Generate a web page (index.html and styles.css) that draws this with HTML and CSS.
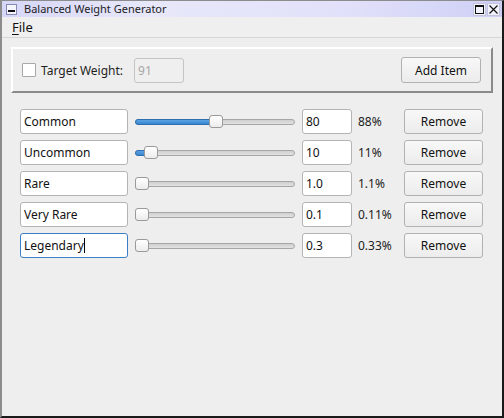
FILE: index.html
```html
<!DOCTYPE html>
<html>
<head>
<meta charset="utf-8">
<link rel="stylesheet" href="styles.css">
</head>
<body>
<div class="window">
  <div class="titlebar">
    <span class="ticon"><span class="ticon-bar"></span></span>
    <span class="title">Balanced Weight Generator</span>
    <span class="tbtns">
      <span class="tbtn max"><span class="max-box"></span></span>
      <span class="tbtn close">
        <svg width="11" height="11" viewBox="0 0 11 11"><path d="M1.5 1.5 L9.5 9.5 M9.5 1.5 L1.5 9.5" stroke="#111" stroke-width="1.2" fill="none"/></svg>
      </span>
    </span>
  </div>
  <div class="menubar"><span class="menu"><u>F</u>ile</span></div>
  <div class="content">
    <div class="group">
      <span class="check"></span>
      <span class="label">Target Weight:</span>
      <span class="input disabled small">91</span>
      <span class="spacer"></span>
      <span class="button add">Add Item</span>
    </div>
    <div class="rows">
      <div class="row">
        <span class="input name">Common</span>
        <span class="slider"><span class="groove"></span><span class="fill" style="width:80px"></span><span class="handle" style="left:74px"></span></span>
        <span class="input value">80</span>
        <span class="pct">88%</span>
        <span class="button remove">Remove</span>
      </div>
      <div class="row">
        <span class="input name">Uncommon</span>
        <span class="slider"><span class="groove"></span><span class="fill" style="width:14px"></span><span class="handle" style="left:9px"></span></span>
        <span class="input value">10</span>
        <span class="pct">11%</span>
        <span class="button remove">Remove</span>
      </div>
      <div class="row">
        <span class="input name">Rare</span>
        <span class="slider"><span class="groove"></span><span class="handle" style="left:0px"></span></span>
        <span class="input value">1.0</span>
        <span class="pct">1.1%</span>
        <span class="button remove">Remove</span>
      </div>
      <div class="row">
        <span class="input name">Very Rare</span>
        <span class="slider"><span class="groove"></span><span class="handle" style="left:0px"></span></span>
        <span class="input value">0.1</span>
        <span class="pct">0.11%</span>
        <span class="button remove">Remove</span>
      </div>
      <div class="row">
        <span class="input name focus">Legendary<span class="caret"></span></span>
        <span class="slider"><span class="groove"></span><span class="handle" style="left:0px"></span></span>
        <span class="input value">0.3</span>
        <span class="pct">0.33%</span>
        <span class="button remove">Remove</span>
      </div>
    </div>
  </div>
</div>
</body>
</html>
```
FILE: styles.css
```css
* { box-sizing: border-box; }
html, body { margin: 0; padding: 0; }
body {
  width: 504px;
  height: 418px;
  overflow: hidden;
  font-family: "Noto Sans", "Open Sans", sans-serif;
  font-size: 12px;
  color: #1e1e1e;
  background: #efefef;
}
.window {
  width: 504px;
  height: 418px;
  display: flex;
  flex-direction: column;
  background: #efefef;
  border-left: 2px solid #8c8c8c;
  border-right: 2px solid #1a1a1a;
  border-bottom: 2px solid #1a1a1a;
  border-top: 1px solid #8c8c8c;
}
.titlebar {
  height: 16px;
  flex: none;
  display: flex;
  align-items: center;
  background: linear-gradient(to right, #d6d6f8 0%, #e8e8fa 30%, #e0e0fa 70%, #cfcff6 100%);
  padding-left: 2px;
  padding-right: 2px;
}
.ticon {
  width: 11px;
  height: 11px;
  border: 1px solid #8888b0;
  background: #f4f4ff;
  display: flex;
  align-items: flex-end;
  justify-content: center;
  padding-bottom: 2px;
  margin-left: 2px;
}
.ticon-bar {
  width: 7px;
  height: 2px;
  background: #111;
}
.title {
  font-size: 11px;
  color: #222;
  margin-left: 7px;
  line-height: 16px;
}
.tbtns {
  margin-left: auto;
  display: flex;
  gap: 1px;
}
.tbtn {
  width: 13px;
  height: 13px;
  background: #f2f2fc;
  border: 1px solid #c4c4dc;
  display: flex;
  align-items: center;
  justify-content: center;
}
.max-box {
  width: 9px;
  height: 9px;
  border: 1px solid #111;
  border-top-width: 2px;
}
.menubar {
  height: 21px;
  flex: none;
  display: flex;
  align-items: center;
  padding-left: 10px;
  border-bottom: 1px solid #d6d6d6;
  background: #efefef;
}
.menu {
  font-size: 13px;
  color: #111;
}
.menu u { text-underline-offset: 2px; }
.content {
  flex: 1;
  padding: 9px 9px 0 9px;
  background: #eeeeee;
}
.group {
  height: 46px;
  display: flex;
  align-items: center;
  border-top: 2px solid #ffffff;
  border-left: 2px solid #ffffff;
  border-right: 2px solid #8a8a8a;
  border-bottom: 2px solid #8a8a8a;
  padding-left: 9px;
  padding-right: 10px;
}
.check {
  width: 14px;
  height: 14px;
  background: #fff;
  border: 1px solid #a8a8a8;
  border-radius: 1px;
}
.label {
  margin-left: 5px;
  font-size: 12px;
}
.input {
  height: 25px;
  background: #fff;
  border: 1px solid #b4b4b4;
  border-radius: 3px;
  display: flex;
  align-items: center;
  padding-left: 3px;
  font-size: 12px;
  color: #111;
}
.input.disabled {
  background: #efefef;
  color: #a6a6a6;
  border-color: #c4c4c4;
}
.input.small {
  width: 50px;
  margin-left: 11px;
}
.spacer { flex: 1; }
.button {
  height: 26px;
  display: flex;
  align-items: center;
  justify-content: center;
  background: linear-gradient(#f8f8f8, #ececec);
  border: 1px solid #b2b2b2;
  border-radius: 3px;
  font-size: 12px;
  color: #111;
}
.button.add { width: 80px; }
.rows {
  margin-top: 16px;
  padding-left: 9px;
  display: flex;
  flex-direction: column;
  gap: 6px;
}
.row {
  display: flex;
  align-items: center;
  height: 25px;
}
.input.name {
  width: 108px;
}
.input.focus {
  border-color: #3b7fc4;
}
.caret {
  display: inline-block;
  width: 1px;
  height: 15px;
  background: #000;
}
.slider {
  position: relative;
  width: 160px;
  height: 14px;
  margin-left: 7px;
}
.groove {
  position: absolute;
  left: 0;
  right: 0;
  top: 4px;
  height: 6px;
  border: 1px solid #a6a6a6;
  border-radius: 3px;
  background: linear-gradient(#cfcfcf, #e2e2e2);
}
.fill {
  position: absolute;
  left: 0;
  top: 4px;
  height: 6px;
  border: 1px solid #2f6fb0;
  border-radius: 3px 0 0 3px;
  background: linear-gradient(#5aa2e4, #3a86d0);
}
.handle {
  position: absolute;
  top: 0;
  width: 14px;
  height: 13px;
  background: linear-gradient(#ffffff, #ececec);
  border: 1px solid #9a9a9a;
  border-radius: 3px;
}
.input.value {
  width: 50px;
  margin-left: 7px;
}
.pct {
  width: 52px;
  padding-left: 6px;
  font-size: 12px;
  color: #222;
}
.button.remove {
  width: 79px;
  height: 25px;
}
```
